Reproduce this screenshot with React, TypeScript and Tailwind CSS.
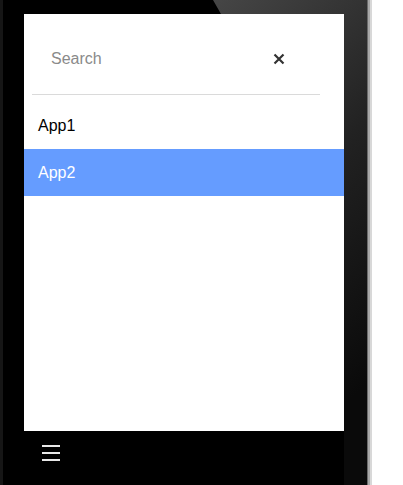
import React from "react";

export default function App() {
  return (
    <div className="w-[403px] h-[485px] bg-white flex overflow-hidden" style={{ fontFamily: '"Liberation Sans", Arial, sans-serif' }}>
      <div className="relative w-[364px] h-full bg-black flex flex-col border-l-[3px] border-[#161616]">
        <svg className="absolute left-0 top-0" width="364" height="485" viewBox="0 0 364 485">
          <defs>
            <linearGradient id="sheen" x1="0" y1="0" x2="0.3" y2="1">
              <stop offset="0" stopColor="#464646" />
              <stop offset="0.5" stopColor="#222" />
              <stop offset="1" stopColor="#0a0a0a" />
            </linearGradient>
          </defs>
          <polygon points="210,0 364,0 364,485 341,485 341,230" fill="url(#sheen)" />
        </svg>
        <div className="relative ml-[21px] mt-[14px] w-[320px] h-[417px] bg-white flex flex-col">
          <div className="h-[80px] flex items-center pt-[10px] pl-[27px] pr-[59px] justify-between">
            <span className="text-[16px] text-[#8a8a8a]">Search</span>
            <svg width="12" height="12" viewBox="0 0 12 12" className="-mt-[1px]">
              <path d="M1.5 1.5 L10.5 10.5 M10.5 1.5 L1.5 10.5" stroke="#333" strokeWidth="2.2" />
            </svg>
          </div>
          <div className="ml-[8px] mr-[24px] h-px bg-[#dadada]" />
          <div className="h-[54px] flex items-center pl-[14px] pt-[8px] text-[16px] text-black">App1</div>
          <div className="h-[47px] flex items-center pl-[14px] text-[16px] text-white bg-[#659cff]">App2</div>
        </div>
        <div className="relative ml-[39px] mt-[14px] flex flex-col gap-[5px] w-[18px]">
          <div className="h-[2px] bg-[#e8e8e8]" />
          <div className="h-[2px] bg-[#e8e8e8]" />
          <div className="h-[2px] bg-[#e8e8e8]" />
        </div>
      </div>
      <div className="w-[2px] h-full bg-[#3a3a3a]" />
      <div className="w-[2px] h-full bg-[#6a6a6a]" />
      <div className="w-[2px] h-full bg-[#a8a8a8]" />
      <div className="w-[2px] h-full bg-[#d8d8d8]" />
      <div className="flex-1 h-full bg-white" />
    </div>
  );
}
